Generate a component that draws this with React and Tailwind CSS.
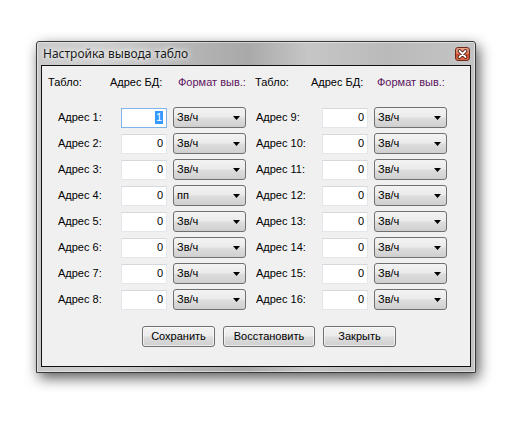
import React from "react";

const rows = [
  { a: "Адрес 1:", av: "1", af: "Зв/ч", b: "Адрес 9:", bv: "0", bf: "Зв/ч", focus: true },
  { a: "Адрес 2:", av: "0", af: "Зв/ч", b: "Адрес 10:", bv: "0", bf: "Зв/ч" },
  { a: "Адрес 3:", av: "0", af: "Зв/ч", b: "Адрес 11:", bv: "0", bf: "Зв/ч" },
  { a: "Адрес 4:", av: "0", af: "пп", b: "Адрес 12:", bv: "0", bf: "Зв/ч" },
  { a: "Адрес 5:", av: "0", af: "Зв/ч", b: "Адрес 13:", bv: "0", bf: "Зв/ч" },
  { a: "Адрес 6:", av: "0", af: "Зв/ч", b: "Адрес 14:", bv: "0", bf: "Зв/ч" },
  { a: "Адрес 7:", av: "0", af: "Зв/ч", b: "Адрес 15:", bv: "0", bf: "Зв/ч" },
  { a: "Адрес 8:", av: "0", af: "Зв/ч", b: "Адрес 16:", bv: "0", bf: "Зв/ч" },
];

// numeric text box
const NumBox = ({ value, focus }) => (
  <div
    className={`w-[46px] h-[20px] bg-white flex items-center justify-end pr-[3px] border ${
      focus ? "border-[#7eb4ea]" : "border-[#e3e6ea] border-t-[#d5d8dd]"
    }`}
  >
    {focus ? (
      <span className="bg-[#3399ff] text-white h-[13px] leading-[13px] px-[1px]">{value}</span>
    ) : (
      <span className="leading-[13px]">{value}</span>
    )}
  </div>
);

// combo box
const Combo = ({ value }) => (
  <div className="ml-[6px] w-[73px] h-[21px] rounded-[3px] border border-[#707070] bg-[linear-gradient(180deg,#f3f3f3_0%,#ebebeb_45%,#dddddd_55%,#cfcfcf_100%)] flex items-center justify-between pl-[3px] pr-[5px]">
    <span className="leading-[13px]">{value}</span>
    <svg width="7" height="4" viewBox="0 0 7 4">
      <polygon points="0,0 7,0 3.5,4" fill="#000" />
    </svg>
  </div>
);

const Button = ({ label, w }) => (
  <div
    className={`${w} h-[21px] rounded-[3px] border border-[#707070] bg-[linear-gradient(180deg,#f2f2f2_0%,#ebebeb_45%,#dddddd_55%,#cfcfcf_100%)] flex items-center justify-center shadow-[inset_0_0_0_1px_rgba(255,255,255,0.6)]`}
  >
    {label}
  </div>
);

export default function App() {
  return (
    <div className="w-[527px] h-[429px] bg-white pt-[41px] pl-[36px] font-['Liberation_Sans',Arial,sans-serif] text-[11px] text-black">
      {/* window */}
      <div className="w-[440px] h-[332px] border border-[#3a3a3a] rounded-t-[3px] flex flex-col bg-[linear-gradient(90deg,#c9c9c9_0%,#cfcfcf_15%,#b5b5b5_35%,#a9a9a9_48%,#c6c6c6_62%,#bababa_80%,#c4c4c4_100%)] shadow-[inset_0_0_0_1px_rgba(255,255,255,0.45),3px_5px_14px_rgba(0,0,0,0.65)]">
        {/* title bar */}
        <div className="h-[23px] flex items-center justify-between pl-[6px] pr-[5px]">
          <span className="font-['Noto_Sans',sans-serif] text-[12px] text-[#1a1a1a] [text-shadow:0_0_8px_#fff,0_0_4px_#fff] pt-[1px]">
            Настройка вывода табло
          </span>
          <div className="w-[15px] h-[14px] mt-[1px] rounded-[3px] border border-[#6b2a1c] bg-[linear-gradient(180deg,#eca58c_0%,#de7a58_45%,#cc4a2c_55%,#dc6d48_100%)] flex items-center justify-center">
            <svg width="11" height="10" viewBox="0 0 11 10">
              <path d="M2.5 2 L8.5 8 M8.5 2 L2.5 8" stroke="#4a1a10" strokeWidth="3.6" strokeLinecap="round" />
              <path d="M2.5 2 L8.5 8 M8.5 2 L2.5 8" stroke="#fff" strokeWidth="1.8" strokeLinecap="round" />
            </svg>
          </div>
        </div>

        {/* client area */}
        <div className="mx-[4px] mb-[5px] h-[302px] border border-[#111] bg-[#f0f0f0] flex flex-col">
          {/* headers */}
          <div className="mt-[10px] h-[13px] leading-[13px] flex pl-[6px]">
            <span className="w-[62px]">Табло:</span>
            <span className="w-[68px]">Адрес БД:</span>
            <span className="w-[77px] text-[#5c1560]">Формат выв.:</span>
            <span className="w-[56px]">Табло:</span>
            <span className="w-[66px]">Адрес БД:</span>
            <span className="text-[#5c1560]">Формат выв.:</span>
          </div>

          {/* rows */}
          <div className="mt-[18px] flex flex-col gap-[5px]">
            {rows.map((r) => (
              <div key={r.a} className="h-[21px] flex items-center pl-[16px]">
                <span className="w-[63px]">{r.a}</span>
                <NumBox value={r.av} focus={r.focus} />
                <Combo value={r.af} />
                <span className="ml-[10px] w-[66px]">{r.b}</span>
                <NumBox value={r.bv} />
                <Combo value={r.bf} />
              </div>
            ))}
          </div>

          {/* buttons */}
          <div className="mt-[16px] flex gap-[8px] pl-[100px]">
            <Button label="Сохранить" w="w-[73px]" />
            <Button label="Восстановить" w="w-[92px]" />
            <Button label="Закрыть" w="w-[73px]" />
          </div>
        </div>
      </div>
    </div>
  );
}
